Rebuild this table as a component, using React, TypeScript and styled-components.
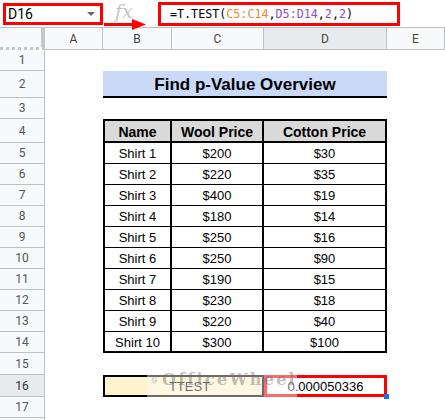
import React from "react";
import styled, { createGlobalStyle } from "styled-components";

const GlobalStyle = createGlobalStyle`
  html, body { margin: 0; padding: 0; background: #fff; }
  body { font-family: "Liberation Sans", Arial, sans-serif; width: 445px; height: 420px; overflow: hidden; }
`;

const Page = styled.div`
  position: relative;
  width: 445px;
  height: 420px;
  overflow: hidden;
  background: #fff;
`;

const FormulaBar = styled.div`
  display: flex;
  align-items: center;
  height: 27px;
  padding: 0 3px;
  gap: 12px;
  box-sizing: border-box;
`;

const NameBox = styled.div`
  display: flex;
  align-items: center;
  justify-content: space-between;
  width: 100px;
  height: 22px;
  box-sizing: border-box;
  border: 3px solid #ff0000;
  padding: 0 5px 0 2px;
  font-family: Roboto, "Liberation Sans", sans-serif;
  font-size: 14px;
  color: #000;
`;

const Caret = styled.span`
  width: 0;
  height: 0;
  border-left: 4px solid transparent;
  border-right: 4px solid transparent;
  border-top: 4px solid #666;
`;

const FxIcon = styled.span`
  width: 31px;
  font-family: "DejaVu Serif", "Liberation Serif", serif;
  font-style: italic;
  font-size: 19px;
  color: #c4c4c4;
  line-height: 1;
  margin-top: -4px;
`;

const FormulaBox = styled.div`
  display: flex;
  align-items: center;
  width: 242px;
  height: 24px;
  box-sizing: border-box;
  border: 3px solid #ff0000;
  padding-left: 9px;
  font-family: "DejaVu Sans Mono", "Liberation Mono", monospace;
  font-size: 11.7px;
  color: #000;
  white-space: pre;
`;

const Token = styled.span<{ $color?: string }>`
  color: ${(p) => p.$color ?? "#000"};
`;

const Arrow = styled.svg`
  position: absolute;
  left: 104px;
  top: 19px;
`;

const Sheet = styled.div`
  display: grid;
  grid-template-columns: 45px 58px 69px 92px 123px 1fr;
  grid-template-rows: 23px 21px 27px 21px 24px repeat(10, 21px) 22px 22px 21px 21px;
`;

const Corner = styled.div`
  grid-column: 1;
  grid-row: 1;
  background: #f8f9fa;
  border-top: 1px solid #c0c0c0;
  border-right: 4px solid #c6c6c6;
  border-bottom: 3px dotted #c6c6c6;
  box-sizing: border-box;
`;

const ColHeader = styled.div<{ $col: number; $selected?: boolean }>`
  grid-column: ${(p) => p.$col};
  grid-row: 1;
  display: flex;
  align-items: center;
  justify-content: center;
  background: ${(p) => (p.$selected ? "#e8eaed" : "#f8f9fa")};
  border-top: 1px solid #c0c0c0;
  border-right: 1px solid #c0c0c0;
  border-bottom: 1px solid #c0c0c0;
  box-sizing: border-box;
  font-family: Roboto, "Liberation Sans", sans-serif;
  font-size: 12px;
  color: #444;
`;

const RowHeader = styled.div<{ $row: number; $selected?: boolean }>`
  grid-column: 1;
  grid-row: ${(p) => p.$row};
  display: flex;
  align-items: center;
  justify-content: center;
  background: ${(p) => (p.$selected ? "#e8eaed" : "#f8f9fa")};
  border-right: 1px solid #c0c0c0;
  border-bottom: 1px solid #c0c0c0;
  box-sizing: border-box;
  font-family: Roboto, "Liberation Sans", sans-serif;
  font-size: 12px;
  color: ${(p) => (p.$selected ? "#333" : "#555")};
`;

const TitleCell = styled.div`
  grid-column: 3 / 6;
  grid-row: 3;
  display: flex;
  align-items: center;
  justify-content: center;
  background: #c9daf8;
  border-bottom: 2px solid #000;
  box-sizing: border-box;
  font-weight: bold;
  font-size: 17px;
  color: #000;
  padding-top: 2px;
`;

const TableCell = styled.div<{
  $col: number;
  $row: number;
  $head?: boolean;
  $first?: boolean;
  $last?: boolean;
}>`
  grid-column: ${(p) => p.$col};
  grid-row: ${(p) => p.$row};
  display: flex;
  align-items: center;
  justify-content: center;
  box-sizing: border-box;
  background: ${(p) => (p.$head ? "#d9d9d9" : "#fff")};
  border-right: 2px solid #000;
  border-left: ${(p) => (p.$first ? "2px solid #000" : "none")};
  border-top: ${(p) => (p.$head ? "2px solid #000" : "none")};
  border-bottom: ${(p) => (p.$head || p.$last ? "2px" : "1px")} solid #000;
  font-size: ${(p) => (p.$head ? "14px" : "13px")};
  font-weight: ${(p) => (p.$head ? "bold" : "normal")};
  color: #000;
  padding-top: 1px;
`;

const LabelCell = styled.div`
  grid-column: 3 / 5;
  grid-row: 17;
  display: flex;
  align-items: center;
  justify-content: center;
  box-sizing: border-box;
  background: #fff2cc;
  border: 2px solid #000;
  font-size: 13px;
  color: #000;
  padding-left: 12px;
`;

const ResultCell = styled.div`
  grid-column: 5;
  grid-row: 17;
  position: relative;
  display: flex;
  align-items: center;
  justify-content: center;
  box-sizing: border-box;
  border: 3px solid #ff0000;
  font-size: 13px;
  color: #000;
`;

const FillHandle = styled.span`
  position: absolute;
  right: -5px;
  bottom: -5px;
  width: 5px;
  height: 5px;
  background: #1a73e8;
`;

const Watermark = styled.div`
  position: absolute;
  left: 147px;
  top: 362px;
  width: 150px;
  height: 36px;
  display: flex;
  align-items: center;
  gap: 5px;
  padding-left: 5px;
  box-sizing: border-box;
  background: rgba(255, 255, 255, 0.42);
`;

const WatermarkText = styled.span`
  font-family: "DejaVu Serif", "Liberation Serif", serif;
  font-weight: bold;
  font-size: 16px;
  letter-spacing: 2.3px;
  color: rgba(110, 110, 110, 0.45);
  margin-top: -2px;
`;

const rows: [string, string, string][] = [
  ["Shirt 1", "$200", "$30"],
  ["Shirt 2", "$220", "$35"],
  ["Shirt 3", "$400", "$19"],
  ["Shirt 4", "$180", "$14"],
  ["Shirt 5", "$250", "$16"],
  ["Shirt 6", "$250", "$90"],
  ["Shirt 7", "$190", "$15"],
  ["Shirt 8", "$230", "$18"],
  ["Shirt 9", "$220", "$40"],
  ["Shirt 10", "$300", "$100"],
];

const columns = ["A", "B", "C", "D", "E"];

export default function App() {
  return (
    <Page>
      <GlobalStyle />
      <FormulaBar>
        <NameBox>
          <span>D16</span>
          <Caret />
        </NameBox>
        <FxIcon>fx</FxIcon>
        <FormulaBox>
          <Token>=T.TEST(</Token>
          <Token $color="#e8893a">C5:C14</Token>
          <Token>,</Token>
          <Token $color="#8e4fb8">D5:D14</Token>
          <Token>,</Token>
          <Token $color="#7b4fc0">2</Token>
          <Token>,</Token>
          <Token $color="#7b4fc0">2</Token>
          <Token>)</Token>
        </FormulaBox>
      </FormulaBar>
      <Arrow width="42" height="11" viewBox="0 0 42 11">
        <line x1="0" y1="5.5" x2="30" y2="5.5" stroke="#ff0000" strokeWidth="3" />
        <polygon points="28,0 42,5.5 28,11" fill="#ff0000" />
      </Arrow>

      <Sheet>
        <Corner />
        {columns.map((c, i) => (
          <ColHeader key={c} $col={i + 2} $selected={c === "D"}>
            {c}
          </ColHeader>
        ))}
        {Array.from({ length: 18 }, (_, i) => (
          <RowHeader key={i} $row={i + 2} $selected={i + 1 === 16}>
            {i < 17 ? i + 1 : ""}
          </RowHeader>
        ))}

        <TitleCell>Find p-Value Overview</TitleCell>

        <TableCell $col={3} $row={5} $head $first>Name</TableCell>
        <TableCell $col={4} $row={5} $head>Wool Price</TableCell>
        <TableCell $col={5} $row={5} $head>Cotton Price</TableCell>

        {rows.map((r, i) => {
          const last = i === rows.length - 1;
          return (
            <React.Fragment key={r[0]}>
              <TableCell $col={3} $row={i + 6} $first $last={last}>{r[0]}</TableCell>
              <TableCell $col={4} $row={i + 6} $last={last}>{r[1]}</TableCell>
              <TableCell $col={5} $row={i + 6} $last={last}>{r[2]}</TableCell>
            </React.Fragment>
          );
        })}

        <LabelCell>TTEST</LabelCell>
        <ResultCell>
          0.000050336
          <FillHandle />
        </ResultCell>
      </Sheet>

      <Watermark>
        <svg width="20" height="30" viewBox="0 0 20 30">
          <g fill="none" stroke="rgba(110,110,110,0.5)" strokeWidth="2">
            <polygon points="10,2 19,7 19,23 10,28 1,23 1,7" />
            <polyline points="14,9 10,7 5,10 5,15 10,18 15,15 15,20 10,23 6,21" />
          </g>
        </svg>
        <WatermarkText>OfficeWheel</WatermarkText>
      </Watermark>
    </Page>
  );
}
